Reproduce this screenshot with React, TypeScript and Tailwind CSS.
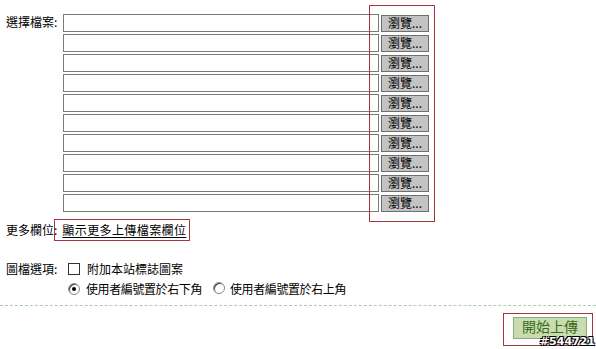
const rows = Array.from({ length: 10 }, (_, i) => i);

function Radio({ checked }: { checked?: boolean }) {
    return (
        <span className="relative inline-block h-[12px] w-[12px] rounded-full border border-[#8a8a8a] bg-white shadow-[inset_1px_1px_0_#444]">
            {checked && <span className="absolute left-[3px] top-[3px] h-[4px] w-[4px] rounded-full bg-black" />}
        </span>
    );
}

export default function App() {
    return (
        <div className="relative h-[349px] w-[596px] overflow-hidden bg-white text-[12px] leading-[18px] text-black [font-family:'Noto_Sans_CJK_TC','Noto_Sans_CJK_SC',sans-serif]">
            <div className="flex pl-[6px] pt-[14px]">
                <span className="w-[57px] leading-[16px]">選擇檔案:</span>
                <div className="flex flex-col gap-[2px]">
                    {rows.map((i) => (
                        <div key={i} className="flex items-center">
                            <div className="h-[18px] w-[316px] border border-[#7a7a7a] bg-white" />
                            <button className="ml-[2px] h-[17px] w-[48px] border border-[#6f6f6f] bg-[#c3c3c3] text-[12px] leading-[14px] text-black">
                                瀏覽...
                            </button>
                        </div>
                    ))}
                </div>
            </div>

            <div className="mt-[9px] flex h-[18px] items-center pl-[6px]">
                <span>更多欄位:</span>
                <a className="ml-[5px] tracking-[0.4px] underline underline-offset-2" href="#">顯示更多上傳檔案欄位</a>
            </div>

            <div className="mt-[21px] flex pl-[6px]">
                <span className="w-[62px]">圖檔選項:</span>
                <div className="flex flex-col gap-[2px]">
                    <div className="flex h-[18px] items-center">
                        <span className="inline-block h-[12px] w-[12px] border border-[#333] bg-white" />
                        <span className="ml-[7px]">附加本站標誌圖案</span>
                    </div>
                    <div className="flex h-[18px] items-center">
                        <Radio checked />
                        <span className="ml-[6px] tracking-[-0.4px]">使用者編號置於右下角</span>
                        <span className="ml-[11px]"><Radio /></span>
                        <span className="ml-[5px] tracking-[-0.4px]">使用者編號置於右上角</span>
                    </div>
                </div>
            </div>

            <div className="mt-[7px] border-t border-dashed border-[#a9cfa9]" />

            <div className="flex justify-end pr-[9px] pt-[11px]">
                <button className="h-[22px] w-[74px] border border-[#8fa97a] bg-[#c8dcb0] pb-[4px] text-[14px] leading-[17px] text-[#3a6a1c]">
                    開始上傳
                </button>
            </div>

            {/* annotation overlays */}
            <div className="absolute left-[369px] top-[5px] h-[217px] w-[66px] border border-[#a8343f]" />
            <div className="absolute left-[54px] top-[219px] h-[22px] w-[136px] border border-[#a8343f]" />
            <div className="absolute left-[503px] top-[313px] h-[33px] w-[90px] border border-[#a8343f]" />
            <span className="absolute right-[1px] top-[335px] text-[11px] font-bold leading-[13px] text-white [font-family:'DejaVu_Sans',sans-serif] [text-shadow:1px_1px_0_#000,-1px_-1px_0_#000,1px_-1px_0_#000,-1px_1px_0_#000]">
                #544721
            </span>
        </div>
    );
}
